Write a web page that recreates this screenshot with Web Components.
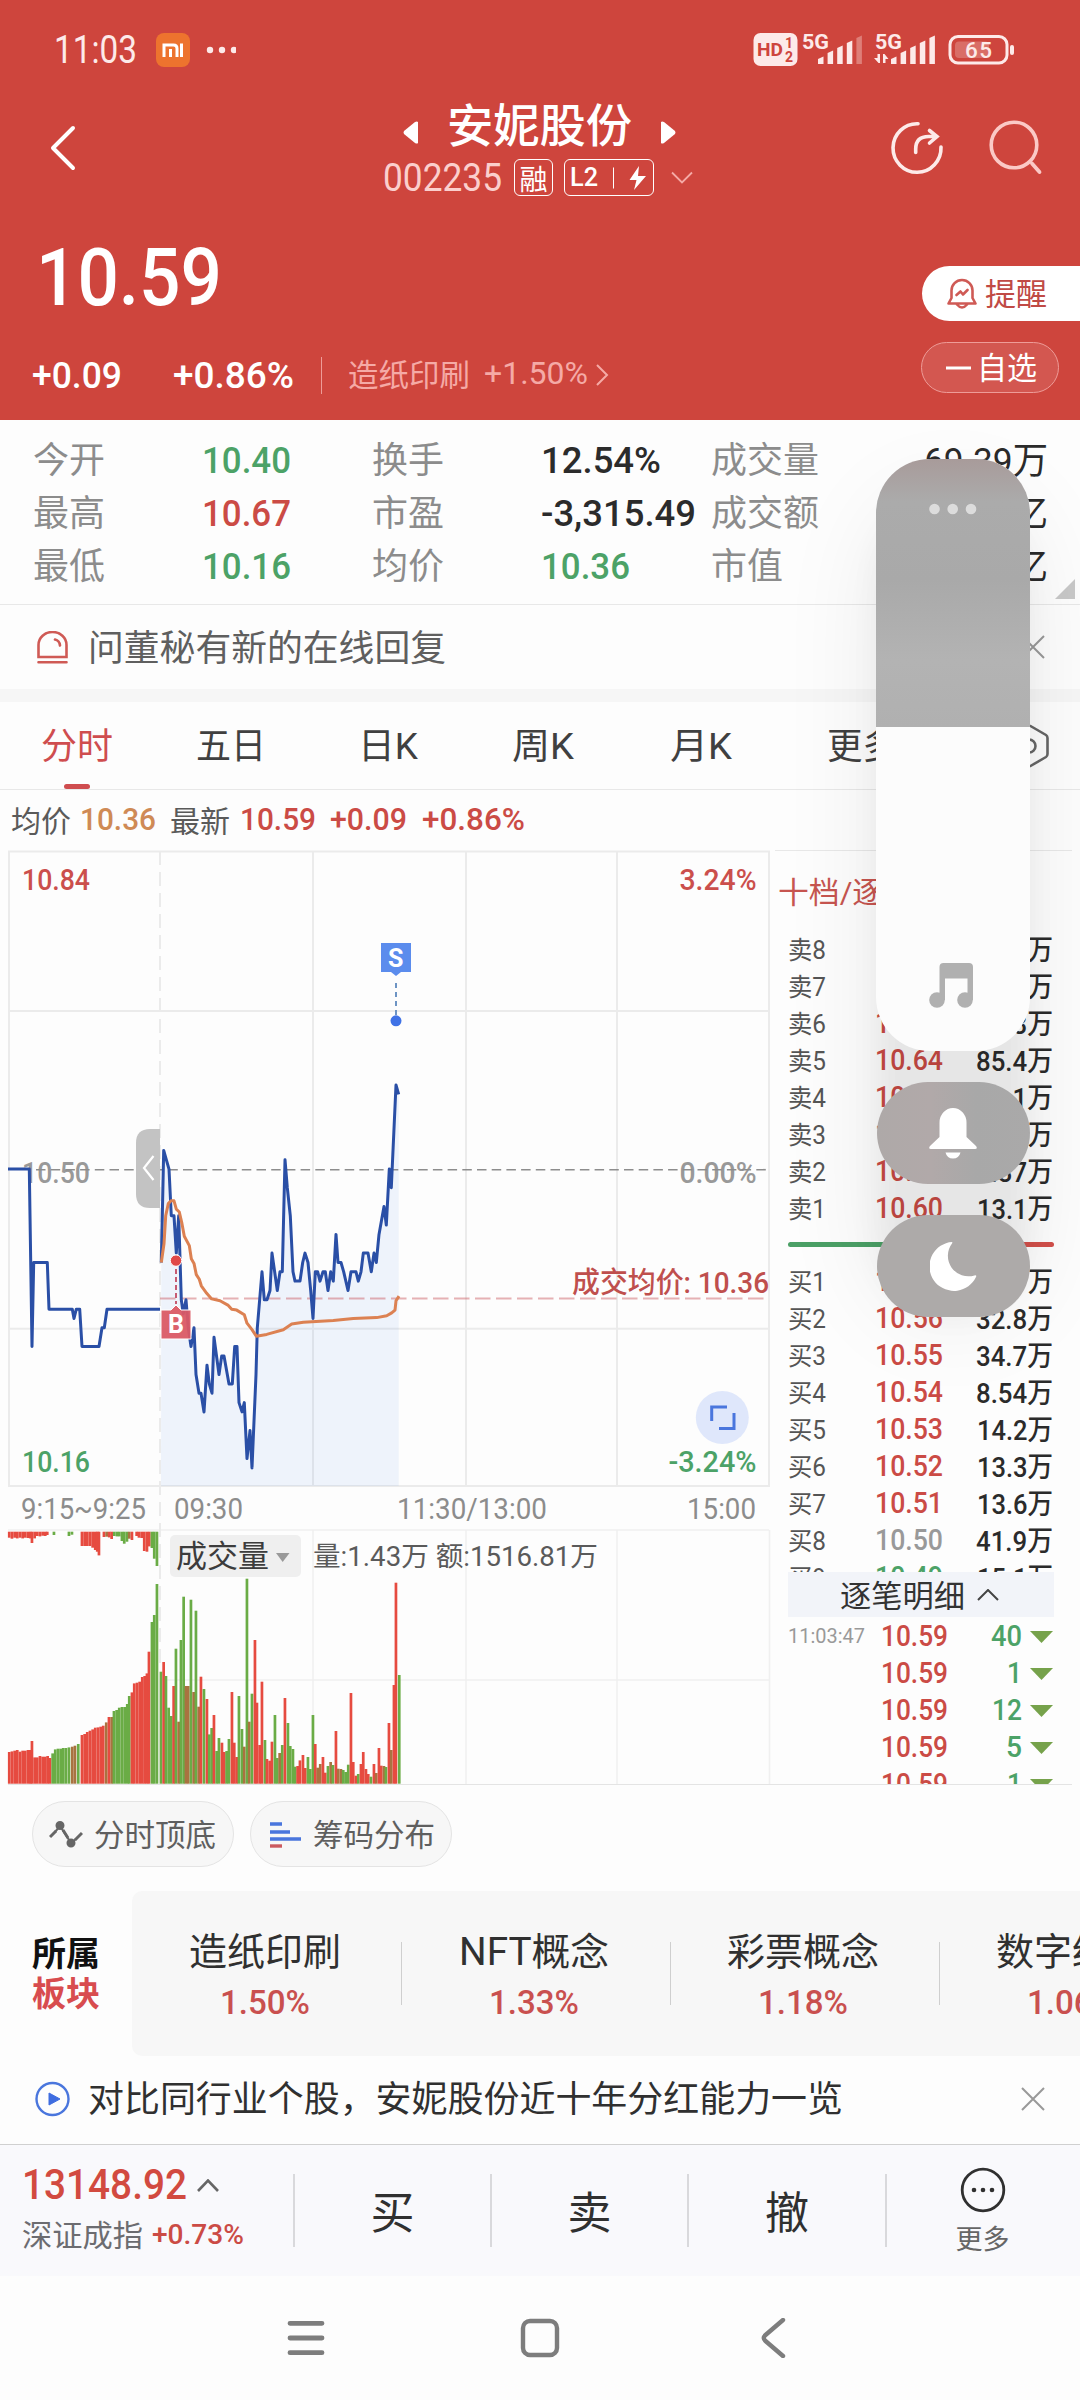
<!DOCTYPE html>
<html lang="zh-CN">
<head>
<meta charset="UTF-8">
<title>安妮股份 002235</title>
<style>
    html, body {
        margin: 0;
        padding: 0;
    }

    body {
        position: relative;
        width: 1080px;
        height: 2400px;
        overflow: hidden;
        background: #fdfdfd;
        font-family: Roboto, "Noto Sans CJK SC", sans-serif;
        --red: #cb4b45;
        --green: #4ca267;
        --line: #e8e8e8;
    }
</style>
</head>
<body>
<stock-header></stock-header>
<quote-grid></quote-grid>
<notice-row>
    <svg slot="icon" width="31" height="33" viewBox="0 0 31 33" fill="none" stroke="#cf5a55" stroke-width="2.6" stroke-linecap="round">
        <path d="M1.5 26V14a14 13 0 0 1 28 0v12zM1.5 31.3h28M18 8.5q4.500 1 5 6"/>
    </svg>
    <fit-text w="358" style="color:#5f5f5f">问董秘有新的在线回复</fit-text>
</notice-row>
<chart-tabs></chart-tabs>
<chart-panel>
    <time-chart slot="chart"></time-chart>
    <order-book slot="book"></order-book>
</chart-panel>
<tool-chips></tool-chips>
<sector-strip></sector-strip>
<notice-row class="ad" style="height:88px;--lift:3px">
    <svg slot="icon" width="35" height="36" viewBox="0 0 35 36" style="margin:0 -2px" fill="none">
        <circle cx="17.500" cy="18" r="16" stroke="#4a76dd" stroke-width="2.400"/>
        <path d="M14 12l11 6-11 6z" fill="#3f6de0" stroke="#3f6de0"/>
    </svg>
    <fit-text w="755" style="color:#303030">对比同行业个股，安妮股份近十年分红能力一览</fit-text>
</notice-row>
<trade-bar></trade-bar>
<nav-bar></nav-bar>
<volume-overlay></volume-overlay>

<script>
// Cria o shadow root a partir de um template
class BaseElement extends HTMLElement {
    constructor() {
        super();
        this.attachShadow({ mode: 'open' });
    }

    connectedCallback() {
        const template = document.createElement('template');
        template.innerHTML = this.render();
        this.shadowRoot.replaceChildren(template.content.cloneNode(true));
        this.ready();
    }

    ready() {}
}

// ============================================
// Text squeezed or stretched to a set width
// ============================================
class FitText extends BaseElement {
    render() {
        return `
            <style>
                :host { display: inline-block; flex: none; white-space: nowrap; line-height: 1.2; }
                span { display: inline-block; transform-origin: 0 50%; }
            </style>
            <span><slot></slot></span>
        `;
    }

    ready() {
        const width = Number(this.getAttribute('w'));
        const span = this.shadowRoot.querySelector('span');
        const natural = span.getBoundingClientRect().width;
        if (!width || !natural) return;
        // ideographs sit a little high on Roboto's baseline
        const drop = /[\u4e00-\u9fff]/.test(this.textContent) ? '0.050em' : '0';
        this.style.width = width + 'px';
        span.style.transform = `translateY(${drop}) scaleX(${width / natural})`;
    }
}

// ============================================
// Status bar
// ============================================
class StatusBar extends BaseElement {
    render() {
        const bars = (x, last) => [57, 51, 46, 41, 36].map((top, i) =>
            `<path d="M${x + i * 9.6} 64V${top + 2}l5.500-2.500V64z" opacity="${i === 4 ? last : 1}"/>`).join('');
        return `
            <style>
                :host { display: flex; height: 100px; align-items: center; padding-left: 54px; color: #fdeae9; }
                .time { font-size: 38px; font-weight: 400; margin-top: 1px; }
                .mi { margin-left: 19px; }
                .dots { margin-left: 14px; }
                .right { margin-left: auto; }
                text { font-family: Roboto, sans-serif; font-weight: 700; }
            </style>
            <fit-text class="time" w="83">11:03</fit-text>
            <svg class="mi" width="34" height="34" viewBox="0 0 34 34">
                <rect width="34" height="34" rx="8" fill="#ed732e"/>
                <g fill="none" stroke="#fff" stroke-width="3">
                    <path d="M8 24V12h9.500q3.500 0 3.500 3.500V24M14.500 16v8M25.500 10.500V24"/>
                </g>
            </svg>
            <svg class="dots" width="32" height="8" viewBox="0 0 32 8" fill="#fdeae9">
                <circle cx="6" cy="4" r="3.200"/><circle cx="18" cy="4" r="3.200"/><circle cx="30" cy="4" r="3.200"/>
            </svg>
            <svg class="right" width="330" height="100" viewBox="750 0 330 100" fill="#fdeae9">
                <rect x="753.500" y="33" width="44" height="33" rx="7"/>
                <text x="757" y="56" font-size="18.500" textLength="26" lengthAdjust="spacingAndGlyphs" fill="#ce453d">HD</text>
                <text x="785" y="48" font-size="14" fill="#ce453d">1</text>
                <text x="785" y="62" font-size="14" fill="#ce453d">2</text>
                <text x="802" y="49" font-size="20" textLength="27" lengthAdjust="spacingAndGlyphs">5G</text>
                ${bars(818, 0.35)}
                <text x="875" y="49" font-size="20" textLength="27" lengthAdjust="spacingAndGlyphs">5G</text>
                <path d="M880 54v9h-1.500l-4.500-5h3.500v-4zM883 63v-9h1.500l4 5h-3v4z"/>
                ${bars(891, 1)}
                <rect x="950" y="36.500" width="57" height="26.500" rx="8" fill="none" stroke="#fdeae9" stroke-width="3"/>
                <rect x="955" y="41.500" width="34" height="16.500" rx="4" opacity=".25"/>
                <rect x="1010" y="45" width="4" height="10" rx="2"/>
                <text x="965" y="58" font-size="22.500" style="font-weight:500" textLength="27">65</text>
            </svg>
        `;
    }
}

// ============================================
// Stock header: name, price, change
// ============================================
class StockHeader extends BaseElement {
    render() {
        return `
            <style>
                :host { display: block; height: 420px; background: #ce453d; color: #fff; }
                .title { display: grid; grid-template-columns: 300px 480px 1fr; height: 96px; align-items: center; }
                .back { margin-left: 49px; }
                .name { display: flex; height: 50px; align-items: center; justify-content: center; gap: 28px; margin-right: 2px; font-size: 46px; font-weight: 500; }
                .name svg { margin-top: 15px; }
                .code { display: flex; height: 37px; margin-top: 9px; align-items: center; padding-left: 83px; }
                .code .num { font-size: 38px; margin-top: 2px; color: #fbcfcd; }
                .tag { box-sizing: border-box; height: 37px; border: 1.500px solid #fff; border-radius: 6px; display: flex; align-items: center; justify-content: center; font-size: 28px; }
                .main { display: flex; justify-content: space-between; height: 224px; }
                .price { display: flex; align-items: center; height: 80px; margin: 42px 0 0 36px; font-size: 79px; font-weight: 500; }
                .change { display: flex; height: 40px; margin-top: 38px; padding-left: 32px; align-items: center; font-size: 37px; font-weight: 500; }
                .change i { width: 1px; height: 37px; margin: -2px 26px 0 27px; background: #ee9c98; }
                .sector { margin-top: -3px; font-size: 30.500px; font-weight: 400; color: #f5aaa6; }
                .side { display: flex; flex-direction: column; align-items: flex-end; }
                .pill { box-sizing: border-box; display: flex; align-items: center; font-size: 30.500px; }
                .alert { margin-top: 70px; width: 158px; height: 55px; padding-left: 25px; gap: 8px; border-radius: 28px 0 0 28px; background: #fff; color: #c04a45; }
                .watch { margin: 21px 21px 0 0; width: 138px; height: 51px; padding-left: 24px; gap: 6px; border-radius: 26px; border: 1.500px solid #ee9c98; background: rgba(255, 255, 255, .1); }
            </style>
            <status-bar></status-bar>
            <div class="title">
                <svg class="back" width="30" height="46" viewBox="0 0 30 46" fill="none" stroke="#fff" stroke-width="4" stroke-linecap="round" stroke-linejoin="round"><path d="M24 3L4 23l20 20"/></svg>
                <div>
                    <div class="name">
                        <svg width="16" height="23" viewBox="0 0 16 23" fill="#fff"><path d="M15 1v21q-1 1-3 0L1 13q-1-1.500 0-3L12 1q2-1 3 0z"/></svg>
                        <fit-text w="185">安妮股份</fit-text>
                        <svg width="16" height="23" viewBox="0 0 16 23" fill="#fff"><path d="M1 1v21q1 1 3 0l11-9q1-1.500 0-3L4 1Q2 0 1 1z"/></svg>
                    </div>
                    <div class="code">
                        <fit-text class="num" w="119">002235</fit-text>
                        <div class="tag" style="width:39px;margin-left:12px">融</div>
                        <div class="tag" style="width:90px;margin-left:11px;gap:11px">
                            <fit-text w="28" style="font-size:25px;font-weight:500">L2</fit-text>
                            <svg width="40" height="26" viewBox="0 0 40 26" fill="#fff"><path d="M4 2.500h1v21H4zM30 1L20.500 15h7L25 25l12-14h-8z"/></svg>
                        </div>
                        <svg style="margin-left:17px" width="22" height="13" viewBox="0 0 22 13" fill="none" stroke="#f5aaa6" stroke-width="1.800"><path d="M1 1.500l10 10 10-10"/></svg>
                    </div>
                </div>
                <svg width="300" height="96" viewBox="780 100 300 96" fill="none" stroke-linecap="round">
                    <path d="M918 123.700A24 24.300 0 1 0 941 147" stroke="#fdeae9" stroke-width="3.600"/>
                    <path d="M915.700 152.500V149q0-12.500 13-12.500h7M929.500 130.500l7.500 6-7.500 6.500" stroke="#fdeae9" stroke-width="3.600"/>
                    <circle cx="1014" cy="145" r="22.800" stroke="#fbc9c6" stroke-width="3.600"/>
                    <path d="M1032 163.500l7.500 8.500" stroke="#fbc9c6" stroke-width="3.800"/>
                </svg>
            </div>
            <div class="main">
                <div>
                    <div class="price"><fit-text w="186">10.59</fit-text></div>
                    <div class="change">
                        <fit-text w="90">+0.09</fit-text>
                        <fit-text w="121" style="margin-left:51px">+0.86%</fit-text>
                        <i></i>
                        <fit-text class="sector" w="122">造纸印刷</fit-text>
                        <fit-text class="sector" w="104" style="margin-left:14px">+1.50%</fit-text>
                        <svg style="margin:-3px 0 0 8px" width="13" height="22" viewBox="0 0 13 22" fill="none" stroke="#f5aaa6" stroke-width="2"><path d="M1 1l10 10L1 21"/></svg>
                    </div>
                </div>
                <div class="side">
                    <div class="pill alert">
                        <svg width="30" height="32" viewBox="0 0 30 32" fill="none" stroke="#cf5a55" stroke-width="2.600" stroke-linejoin="round" stroke-linecap="round">
                            <path d="M4.500 20v-7.500a10.500 10.500 0 0 1 21 0V20l3 5.500h-27zM10 26.500q5 6 10 0M9.500 17l4-3.500 2.500 3 4.500-4.500"/>
                        </svg>
                        <fit-text w="62">提醒</fit-text>
                    </div>
                    <div class="pill watch">
                        <svg width="25" height="4"><rect width="25" height="3" y=".5" fill="#fff"/></svg>
                        <fit-text w="60">自选</fit-text>
                    </div>
                </div>
            </div>
        `;
    }
}

// ============================================
// Quote figures
// ============================================
class QuoteGrid extends BaseElement {
    render() {
        const rows = [
            ['今开', '10.40', 'g', 89, '换手', '12.54%', '', 120, '成交量', '69.39万', 124],
            ['最高', '10.67', 'r', 89, '市盈', '-3,315.49', '', 155, '成交额', '亿', 35],
            ['最低', '10.16', 'g', 89, '均价', '10.36', 'g', 89, '市值', '亿', 35]
        ];
        return `
            <style>
                :host { display: grid; box-sizing: border-box; position: relative; height: 185px; padding: 13.500px 32px 0 33px;
                    grid-template-columns: 169px 170px 169px 170px 1fr; grid-auto-rows: 53px; align-items: center;
                    border-bottom: 1px solid var(--line); font-size: 37.500px; color: #2b2b2b; }
                .label { font-size: 36px; color: #8c8c8c; }
                .num { font-weight: 500; }
                .g { color: var(--green); }
                .r { color: var(--red); }
                .end { text-align: right; font-size: 37px; }
                .corner { position: absolute; right: 5px; bottom: 5px; border: 10px solid transparent; border-right-color: #c8c8c8; border-bottom-color: #c8c8c8; }
            </style>
            ${rows.map(r => `
                <fit-text class="label" w="72">${r[0]}</fit-text>
                <fit-text class="num ${r[2]}" w="${r[3]}">${r[1]}</fit-text>
                <fit-text class="label" w="72">${r[4]}</fit-text>
                <fit-text class="num ${r[6]}" w="${r[7]}">${r[5]}</fit-text>
                <div style="display:flex;justify-content:space-between">
                    <fit-text class="label" w="${r[8].length * 36}">${r[8]}</fit-text>
                    <fit-text class="end" w="${r[10]}">${r[9]}</fit-text>
                </div>`).join('')}
            <div class="corner"></div>
        `;
    }
}

// ============================================
// Notice with icon slot and a close cross
// ============================================
class NoticeRow extends BaseElement {
    render() {
        return `
            <style>
                :host { display: flex; box-sizing: border-box; height: 84px; align-items: center; padding: 0 35px var(--lift, 0px) 37px; font-size: 35.800px; }
                .text { margin-left: 20px; display: flex; }
                .close { margin-left: auto; }
            </style>
            <slot name="icon"></slot>
            <div class="text"><slot></slot></div>
            <svg class="close" width="24" height="24" viewBox="0 0 24 24" stroke="#999" stroke-width="2"><path d="M1 1l22 22M23 1L1 23"/></svg>
        `;
    }
}

// ============================================
// Period tabs and the line of figures below
// ============================================
class ChartTabs extends BaseElement {
    render() {
        const tabs = [['分时', 72], ['五日', 70], ['日K', 60], ['周K', 62], ['月K', 62], ['更多', 71]];
        return `
            <style>
                :host { display: block; border-top: 13px solid #f6f6f6; }
                .tabs { display: grid; grid-template-columns: 154px 154px 160px 149px 167px 156px 1fr; height: 87px;
                    border-bottom: 1px solid var(--line); align-items: center; justify-items: center; font-size: 36px; color: #404040; }
                .tab { position: relative; height: 87px; display: flex; align-items: center; }
                .tab fit-text { margin-top: 1px; }
                .active { color: #cf4d4f; }
                .active::after { content: ""; position: absolute; left: 50%; bottom: 0; width: 26px; height: 5px; margin-left: -13px; border-radius: 3px; background: #cf4d4f; }
                .figures { display: flex; height: 59px; align-items: center; padding-left: 11px; font-size: 31.500px; font-weight: 500; color: var(--red); }
                .label { font-size: 30px; font-weight: 400; color: #5a5a5a; }
            </style>
            <div class="tabs">
                ${tabs.map(([name, w], i) => `<div class="tab ${i ? '' : 'active'}"><fit-text w="${w}">${name}</fit-text></div>`).join('')}
                <svg width="44" height="44" viewBox="-22 -22 44 44" style="margin-left:38px" fill="none" stroke="#666" stroke-width="2.600" stroke-linejoin="round">
                    <path d="M-1.500-20h3L17-11q1.500 1 1.500 3V8q0 2-1.500 3L1.500 20h-3L-17 11q-1.500-1-1.500-3V-8q0-2 1.500-3z"/>
                    <circle r="6.500"/>
                </svg>
            </div>
            <div class="figures">
                <fit-text class="label" w="60">均价</fit-text>
                <fit-text w="76" style="margin-left:9px;color:#cf8a55">10.36</fit-text>
                <fit-text class="label" w="60" style="margin-left:14px">最新</fit-text>
                <fit-text w="76" style="margin-left:10px">10.59</fit-text>
                <fit-text w="77" style="margin-left:14px">+0.09</fit-text>
                <fit-text w="103" style="margin-left:15px">+0.86%</fit-text>
            </div>
        `;
    }
}

// ============================================
// Chart on the left, order book on the right
// ============================================
class ChartPanel extends BaseElement {
    render() {
        return `
            <style>
                :host { display: grid; grid-template-columns: 775px 1fr; height: 935px; margin-top: 1px; }
            </style>
            <slot name="chart"></slot>
            <slot name="book"></slot>
        `;
    }
}

// Price series: x in thirds of a pixel, price in cents above 10.00
const AUCTION = [[24, 50], [88, 50], [96, 31], [101, 40], [142, 40], [147, 35], [217, 35], [222, 34], [229, 35], [239, 35], [246, 31], [297, 31], [306, 33], [313, 33], [321, 35], [480, 35]];
const PRICES = [
    [484, 40], [491, 52], [499, 51], [507, 50], [514, 45], [522, 45], [529, 41], [536, 45], [544, 36], [550, 34.500], [558, 36], [565, 33], [573, 31], [582, 33],
    [588, 28], [597, 26], [603, 26], [612, 24], [621, 29], [628, 27], [636, 26], [642, 32], [657, 28], [665, 30], [672, 30], [687, 27], [697, 27],
    [704, 31], [711, 31], [717, 25], [726, 24], [733, 25], [741, 19], [750, 22], [756, 18], [768, 28], [772, 33], [786, 39], [793, 36], [801, 36],
    [810, 37], [816, 41], [832, 37], [840, 39], [847, 39], [855, 51], [862, 48], [871, 45], [879, 39], [885, 38], [900, 38], [908, 40], [915, 41],
    [924, 40], [932, 37], [939, 34], [946, 39], [953, 39], [960, 38], [969, 39], [976, 39], [984, 37], [992, 39], [1000, 38], [1008, 43], [1014, 40],
    [1023, 40], [1031, 39], [1044, 37], [1053, 39], [1068, 39], [1075, 38], [1083, 39], [1090, 41], [1104, 41], [1114, 39], [1122, 41], [1129, 40],
    [1137, 43], [1152, 46], [1159, 44], [1168, 50], [1174, 48], [1188, 59], [1196, 58]
];
const AVERAGE = [
    [484, 40], [492, 42], [497, 45], [505, 46.300], [513, 46.600], [522, 46.600], [529, 45.700], [538, 45.400], [545, 44.300], [553, 42.800], [568, 41.800],
    [574, 40.400], [582, 39.900], [589, 38.700], [598, 38.200], [604, 37.500], [620, 36.700], [635, 36.100], [660, 35.900], [685, 35.400], [695, 35],
    [710, 34.900], [733, 34.400], [741, 33.500], [756, 32.800], [769, 32.100], [800, 32.300], [850, 32.800], [875, 33.400], [910, 33.600], [1000, 33.800],
    [1060, 34], [1130, 34.100], [1160, 34.300], [1175, 34.600], [1185, 34.900], [1188, 35.900], [1197, 36.400]
];
// Volume bars: "x:height" in thirds of a pixel, grouped by colour letter
const VOLUMES = `
    r 28:95 36:97 44:99 52:101 60:96 68:99 76:99 84:101 91:101 96:128 104:79 112:79 120:83 128:81 136:81 143:83 150:77
    g 158:91 166:103 174:105 182:105 190:107 198:107 207:109 b 217:111 225:114 g 235:119
    r 246:146 254:149 262:155 270:159 278:163 286:168 294:169 302:171 310:174 b 319:184 r 327:200 b 335:200
    g 342:218 350:221 358:228 366:230 374:230 382:239 388:263 r 396:274 403:301 411:303 419:306 427:320 434:323 441:331 447:396
    g 456:485 463:506 471:599
    483:336 r 491:365 g 498:323 506:228 514:203 r 521:293 g 528:405 b 536:186 g 543:431 551:561 b 558:293 565:293 g 573:552 b 581:275
    g 588:519 b 596:231 r 603:321 g 612:284 r 621:254 g 628:148 635:167 r 642:206 g 650:98 657:137 r 666:123 673:95 g 680:98 687:134
    r 696:275 703:123 710:80 g 717:263 726:164 b 733:111 g 741:615 b 748:186 g 756:270 r 765:431 771:243 779:116 786:306 g 795:131
    r 801:74 809:69 816:126 g 825:206 832:77 b 839:92 g 847:116 r 855:257 g 864:182 871:113 879:104 886:51 r 893:53 900:70 909:86 916:47
    g 924:80 931:44 939:206 r 946:119 b 953:48 961:59 r 969:80 976:33 g 984:53 b 992:65 g 999:56 r 1008:158 b 1015:45 1023:44 g 1030:41
    1037:35 1045:57 r 1053:272 1060:65 1068:24 g 1075:29 r 1083:59 1090:95 1098:44 1105:29 g 1113:21 r 1122:59 b 1129:32 r 1137:107 1144:54
    b 1152:53 g 1158:50 r 1167:182 b 1174:101 r 1182:296 1188:603 g 1198:326`;
// Unmatched volume, hanging from the top of the pane
const UNMATCHED = `
    r 28:18 36:21 44:18 52:20 60:18 68:20 76:18 84:19 91:20 96:34 104:20 112:13 120:14 128:12 136:13 142:10 g 162:10 207:13 216:9
    r 246:43 254:43 262:43 270:43 278:48 286:55 292:60 297:71 312:16 b 320:15 r 328:17 335:22 g 343:13 351:14 358:14 366:28 373:36 381:30
    b 388:21 r 396:25 410:13 417:18 425:19 433:58 441:60 448:44 g 456:49 463:81 471:103`;
const BAR_COLORS = { r: '#e64b40', g: '#6aac46', b: '#a97340' };

class TimeChart extends BaseElement {
    priceY(cents) {
        return 851.5 + (84 - cents) * 9.34;
    }

    points(series) {
        return series.map(([x, c]) => `${(x / 3).toFixed(1)},${this.priceY(c).toFixed(1)}`).join(' ');
    }

    bars(list, base, direction) {
        let color = 'r';
        return list.trim().split(/\s+/).map(item => {
            if (BAR_COLORS[item]) {
                color = item;
                return '';
            }
            const [x, h] = item.split(':').map(Number);
            const y = direction > 0 ? base : base - h / 3;
            return `<rect x="${(x / 3 - 1.4).toFixed(1)}" y="${y.toFixed(1)}" width="2.700" height="${(h / 3).toFixed(1)}" fill="${BAR_COLORS[color]}"/>`;
        }).join('');
    }

    render() {
        const line = this.points(PRICES);
        const label = (x, y, w, text, color) =>
            `<text x="${x}" y="${y}" textLength="${w}" lengthAdjust="spacingAndGlyphs" fill="${color}">${text}</text>`;
        return `
            <style>
                :host { display: block; }
                svg { display: block; }
                text { font-family: Roboto, "Noto Sans CJK SC", sans-serif; font-size: 29px; font-weight: 500; }
                .plain { font-weight: 400; }
                .time text { font-weight: 400; font-size: 29.500px; }
            </style>
            <svg width="775" height="935" viewBox="0 850 775 935">
                <!-- grid -->
                <g stroke="#ebebeb" stroke-width="2" fill="none">
                    <path d="M9 851.500H769V1486H9zM9 1011H769M9 1328.700H769M313 851V1487M466 851V1487M617 851V1487"/>
                    <path d="M8 1530H769M160 1680H769M313 1530V1784M466 1530V1784M617 1530V1784M769.500 1530V1784" stroke-width="1.500" stroke="#f0f0f0"/>
                    <path d="M160 851V1668" stroke-dasharray="14 7"/>
                    <path d="M8 1784.500H775" stroke="#e4e4e4" stroke-width="1"/>
                </g>

                <!-- price -->
                <polygon points="161,1486 ${line} 398.700,1486" fill="#5b8ced" fill-opacity=".09"/>
                ${label(22, 1182.5, 68, '10.50', '#999')}
                ${label(679.5, 1182.5, 77, '0.00%', '#999')}
                <path d="M36 1169.700H769" stroke="#8d8d8d" stroke-width="1.600" stroke-dasharray="9.500 5.200"/>
                <path d="M160 1298.500H769" stroke="#c8555a" stroke-opacity=".45" stroke-width="1.800" stroke-dasharray="15.500 5.500"/>
                <g fill="none" stroke-width="3" stroke-linejoin="round">
                    <polyline points="${this.points(AUCTION)}" stroke="#2a4fa6"/>
                    <polyline points="${line}" stroke="#2a4fa6"/>
                    <polyline points="${this.points(AVERAGE)}" stroke="#dc8152"/>
                </g>

                <path d="M160 1129h-10q-14 0-14 14v51q0 14 14 14h10z" fill="#c3c3c3"/>
                <path d="M153.500 1156l-9.500 12 9.500 12" fill="none" stroke="#fff" stroke-width="2.200"/>

                <!-- trade markers -->
                <path d="M176 1269V1304" stroke="#c65a72" stroke-width="2" stroke-dasharray="5 3"/>
                <circle cx="176" cy="1260.600" r="5.700" fill="#e04848" stroke="#fff" stroke-width="1"/>
                <path d="M161 1310h10l5-5 5 5h10v29h-30z" fill="#da5a65" fill-opacity=".95" stroke="#fff" stroke-width="1"/>
                <text x="168" y="1333" style="font-weight:700;font-size:25px" fill="#fff">B</text>
                <path d="M396 983V1015" stroke="#6d94c4" stroke-width="2" stroke-dasharray="5 4"/>
                <circle cx="396" cy="1020.800" r="5.500" fill="#3f72e6"/>
                <path d="M381 943h30v29h-10l-5 4-5-4h-10z" fill="#5b8ced"/>
                <text x="388" y="966.500" style="font-weight:700;font-size:25px" fill="#fff">S</text>

                <!-- axis labels -->
                ${label(22, 890, 68, '10.84', '#cb4f4c')}
                ${label(679.5, 890, 77, '3.24%', '#cb4f4c')}
                ${label(22, 1472, 68, '10.16', '#4ca267')}
                ${label(668.5, 1472, 88, '-3.24%', '#4ca267')}
                ${label(572, 1293, 197, '成交均价: 10.36', '#bf4f4d')}
                <g class="time">
                    ${label(21, 1519, 125, '9:15~9:25', '#8c8c8c')}
                    ${label(174, 1519, 69, '09:30', '#8c8c8c')}
                    ${label(397, 1519, 150, '11:30/13:00', '#8c8c8c')}
                    ${label(687, 1519, 69, '15:00', '#8c8c8c')}
                </g>

                <circle cx="722.300" cy="1417.600" r="26.500" fill="#dfe7fb"/>
                <path d="M711.700 1421V1407H727M734 1413V1428.500H719" fill="none" stroke="#4a76dd" stroke-width="3"/>

                <!-- volume -->
                ${this.bars(UNMATCHED, 1531.7, 1)}
                ${this.bars(VOLUMES, 1783.7, -1)}
                <rect x="170" y="1535" width="131" height="42" rx="5" fill="#efefef"/>
                <text class="plain" x="176" y="1567" style="font-size:31px" textLength="93" fill="#3c3c3c">成交量</text>
                <path d="M276 1553h13.500l-6.800 9z" fill="#999"/>
                <text class="plain" x="313" y="1566" style="font-size:27px" textLength="285" lengthAdjust="spacingAndGlyphs" fill="#5a5a5a">量:1.43万 额:1516.81万</text>
            </svg>
        `;
    }
}

// ============================================
// Order book with tick details
// ============================================
class OrderBook extends BaseElement {
    row(name, price, volume, color = '') {
        return `
            <div class="row">
                <fit-text class="name" w="38">${name}</fit-text>
                <fit-text class="price ${color}" w="68">${price}</fit-text>
                <fit-text class="vol" w="${volume.length > 1 ? 77 - (volume[0] === '1' ? 1 : 0) : 25}">${volume}</fit-text>
            </div>`;
    }

    render() {
        const sells = [['卖8', '10.67', '万'], ['卖7', '10.66', '万'], ['卖6', '10.65', '26.3万'], ['卖5', '10.64', '85.4万'], ['卖4', '10.63', '52.1万'], ['卖3', '10.62', '万'], ['卖2', '10.61', '6.37万'], ['卖1', '10.60', '13.1万']];
        const buys = [['买1', '10.57', '万'], ['买2', '10.56', '32.8万'], ['买3', '10.55', '34.7万'], ['买4', '10.54', '8.54万'], ['买5', '10.53', '14.2万'], ['买6', '10.52', '13.3万'], ['买7', '10.51', '13.6万'], ['买8', '10.50', '41.9万', 'flat'], ['买9', '10.49', '15.1万', 'down']];
        const ticks = [['11:03:47', '40', 31], ['', '1', 15], ['', '12', 30], ['', '5', 16], ['', '1', 15]];
        return `
            <style>
                :host { display: block; box-sizing: border-box; margin-right: 8px; border-top: 1px solid var(--line); border-bottom: 1px solid #e4e4e4; }
                .head { height: 80px; display: flex; align-items: center; padding-left: 3px; font-size: 30px; color: #c75550; }
                .body { margin: 0 18px 0 13px; }
                .row { display: grid; grid-template-columns: 87px 1fr auto; height: 37px; align-items: center; padding-right: 1px; }
                .name { font-size: 25px; color: #555; }
                .price { font-size: 29px; font-weight: 500; color: var(--red); }
                .vol { font-size: 28px; font-weight: 500; color: #2b2b2b; }
                .flat { color: #999; }
                .down { color: var(--green); }
                .ratio { height: 5px; margin: 15px 0 16px; border-radius: 3px; background: linear-gradient(90deg, #4ba066 60%, #d2504b 60%); }
                .buys { height: 309px; overflow: hidden; }
                .more { display: flex; height: 45px; align-items: center; padding-left: 52px; gap: 12px; background: #f2f4f9; font-size: 31px; color: #333; }
                .ticks { height: 167px; overflow: hidden; }
                .tick { display: grid; grid-template-columns: 93px 1fr auto 23px; column-gap: 0; height: 37px; align-items: center; padding: 2px 1px 0 0; box-sizing: border-box; }
                .tick .time { font-size: 19.500px; color: #999; }
                .tick .qty { font-size: 29px; font-weight: 500; margin-right: 8px; }
            </style>
            <div class="head"><fit-text w="136">十档/逐笔</fit-text></div>
            <div class="body">
                ${sells.map(r => this.row(...r)).join('')}
                <div class="ratio"></div>
                <div class="buys">${buys.map(r => this.row(...r)).join('')}</div>
                <div class="more">
                    <fit-text w="125">逐笔明细</fit-text>
                    <svg width="22" height="12" viewBox="0 0 22 12" fill="none" stroke="#444" stroke-width="2"><path d="M1 11L11 1l10 10"/></svg>
                </div>
                <div class="ticks">
                    ${ticks.map(([time, qty, w]) => `
                        <div class="tick">
                            <fit-text class="time" w="77">${time}</fit-text>
                            <fit-text class="price" w="67">10.59</fit-text>
                            <fit-text class="qty down" w="${w}">${qty}</fit-text>
                            <svg width="23" height="12"><path d="M0 0h23L11.500 12z" fill="#76a24b"/></svg>
                        </div>`).join('')}
                </div>
            </div>
        `;
    }
}

// ============================================
// Tool chips
// ============================================
class ToolChips extends BaseElement {
    render() {
        return `
            <style>
                :host { display: flex; box-sizing: border-box; height: 106px; padding: 16px 32px 0; gap: 16px; }
                .chip { box-sizing: border-box; display: flex; width: 202px; height: 66px; align-items: center; padding-left: 16px; gap: 11px;
                    border: 1px solid #e4e4e4; border-radius: 33px; background: #f7f7f7; font-size: 30.500px; color: #5f5f5f; }
            </style>
            <div class="chip">
                <svg width="34" height="30" viewBox="0 0 34 30" fill="none" stroke="#666" stroke-width="3">
                    <path d="M1 18l6-6M14 11l5 8M26 21l7-7"/>
                    <circle cx="11" cy="6.500" r="3.500" fill="#666" stroke-width="2"/><circle cx="22" cy="24" r="3.500" fill="#666" stroke-width="2"/>
                    <path d="M6 13l5-6 11 17 5-4" stroke-width="2"/>
                </svg>
                <fit-text w="122">分时顶底</fit-text>
            </div>
            <div class="chip" style="padding-left:19px">
                <svg width="32" height="30" viewBox="0 0 32 30" stroke="#4a76dd" stroke-width="3.400">
                    <path d="M0 5h12M0 13h20M0 20h31"/><path d="M0 27h12" stroke="#cb5a5f"/>
                </svg>
                <fit-text w="122">筹码分布</fit-text>
            </div>
        `;
    }
}

// ============================================
// Sector strip
// ============================================
class SectorStrip extends BaseElement {
    render() {
        const items = [['造纸印刷', '1.50%', 152], ['NFT概念', '1.33%', 150], ['彩票概念', '1.18%', 152], ['数字经济', '1.06%', 152]];
        return `
            <style>
                :host { display: flex; height: 165px; overflow: hidden; }
                .label { width: 132px; flex: none; display: flex; flex-direction: column; justify-content: center; align-items: center; font-size: 34px; font-weight: 700; line-height: 40px; color: #111; }
                .label span:last-child { color: #d84c4f; }
                .strip { display: flex; flex: 1; border-radius: 10px 0 0 10px; background: #f7f7f7; overflow: hidden; }
                .item { flex: none; width: 269px; display: flex; flex-direction: column; align-items: center; font-size: 38px; color: #303030; padding: 36px 3px 0 0; box-sizing: border-box; }
                .item + .item { background: linear-gradient(#cfcfcf, #cfcfcf) no-repeat 0 51px / 1px 63px; }
                .name { line-height: 46px; }
                .pct { margin-top: 6px; line-height: 46px; font-size: 34px; font-weight: 500; color: #c9504f; }
            </style>
            <div class="label"><span>所属</span><span>板块</span></div>
            <div class="strip">
                ${items.map(([name, pct, w]) => `<div class="item"><fit-text class="name" w="${w}">${name}</fit-text><fit-text class="pct" w="90">${pct}</fit-text></div>`).join('')}
            </div>
        `;
    }
}

// ============================================
// Index quote and trade buttons
// ============================================
class TradeBar extends BaseElement {
    render() {
        return `
            <style>
                :host { display: grid; box-sizing: border-box; height: 132px; grid-template-columns: 293px 197px 197px 198px 1fr; border-top: 1px solid #d0d0d0; background: #f9f9fc; }
                .index { padding-left: 22px; }
                .top { display: flex; align-items: center; height: 50px; margin-top: 15px; gap: 10px; font-size: 42px; font-weight: 500; color: #d24a40; }
                .bottom { display: flex; align-items: center; height: 40px; margin-top: 4px; font-size: 30px; color: #6c6c70; }
                .bottom .pct { margin: 2px 0 0 9px; font-size: 28px; font-weight: 500; color: var(--red); }
                .btn { display: flex; align-items: center; justify-content: center; padding: 0 0 2px 2px; font-size: 44px; font-weight: 400; color: #303030;
                    background: linear-gradient(#d9d9dc, #d9d9dc) no-repeat 0 29px / 2px 73px; }
                .more { display: flex; flex-direction: column; align-items: center; font-size: 27px; color: #666; padding-top: 22px;
                    background: linear-gradient(#d9d9dc, #d9d9dc) no-repeat 0 29px / 2px 73px; }
            </style>
            <div class="index">
                <div class="top"><fit-text w="165">13148.92</fit-text>
                    <svg width="22" height="13" viewBox="0 0 22 13" fill="none" stroke="#666" stroke-width="2.600"><path d="M1 12L11 1.500 21 12"/></svg>
                </div>
                <div class="bottom"><fit-text w="121">深证成指</fit-text><fit-text class="pct" w="92">+0.73%</fit-text></div>
            </div>
            <div class="btn">买</div>
            <div class="btn">卖</div>
            <div class="btn">撤</div>
            <div class="more">
                <svg width="46" height="46" viewBox="-23 -23 46 46" fill="#303030">
                    <circle r="20.800" fill="none" stroke="#303030" stroke-width="2.800"/>
                    <circle cx="-9" r="2.300"/><circle r="2.300"/><circle cx="9" r="2.300"/>
                </svg>
                <fit-text w="54" style="margin-top:10px">更多</fit-text>
            </div>
        `;
    }
}

class NavBar extends BaseElement {
    render() {
        return `
            <style>
                :host { display: flex; height: 124px; align-items: center; justify-content: center; gap: 194.500px; background: #fdfdfd; }
            </style>
            <svg width="40" height="40" viewBox="0 0 40 40" fill="none" stroke="#7d7d7d" stroke-width="4.800" stroke-linecap="round"><path d="M4 5.300h32M4 20h32M4 34.700h32"/></svg>
            <svg width="40" height="40" viewBox="0 0 40 40" fill="none" stroke="#7d7d7d" stroke-width="4.400"><rect x="3" y="3" width="34" height="34" rx="7"/></svg>
            <svg width="40" height="40" viewBox="0 0 40 40" fill="none" stroke="#7d7d7d" stroke-width="4.400" stroke-linecap="round" stroke-linejoin="round"><path d="M28 2L10.500 17q-3.500 3 0 6L28 38"/></svg>
        `;
    }
}

// ============================================
// Volume slider and sound mode buttons, floating over the page
// ============================================
class VolumeOverlay extends BaseElement {
    render() {
        return `
            <style>
                :host { position: absolute; left: 876px; top: 459px; width: 154px; display: flex; flex-direction: column; align-items: center; isolation: isolate; }
                /* one soft shadow behind the whole stack */
                :host::before { content: ""; position: absolute; z-index: -1; inset: 60px 20px 20px; border-radius: 60px;
                    background: rgba(0, 0, 0, .09); box-shadow: 0 0 30px 20px rgba(0, 0, 0, .045), 0 0 100px 20px rgba(0, 0, 0, .08); }
                .slider { width: 154px; height: 592px; border-radius: 54px; overflow: hidden; background: #fcfcfc; display: flex; flex-direction: column; align-items: center; }
                .level { width: 100%; height: 268px; display: flex; justify-content: center; background: linear-gradient(#a89b9a, #ababab 16%, #a9a9a9 45%, #b3b3b3 75%, #b0b0b0); }
                .level svg { margin-top: 44px; }
                .slider > svg { margin: 236px 4px 0 0; }
                .mode { width: 153px; height: 102px; margin-top: 31px; border-radius: 51px; display: flex; align-items: center; justify-content: center; background: linear-gradient(90deg, #aea9a8, #b1a9a9 35%, #a8a8a8 65%, #aaa9a9); }
                .bottom { background: #adaaa9; }
            </style>
            <div class="slider">
                <div class="level">
                    <svg width="48" height="12" viewBox="0 0 48 12" fill="#dcdcdc"><circle cx="5.500" cy="6" r="5.300"/><circle cx="23.700" cy="6" r="5.300"/><circle cx="42" cy="6" r="5.300"/></svg>
                </div>
                <svg width="44" height="45" viewBox="0 0 44 45" fill="#b0b0b0"><path d="M10.500 37V4q0-4 4-4H40q4 0 4 4v33h-5.500V15.500H16V37z"/><circle cx="8" cy="37" r="7.800"/><circle cx="36" cy="37" r="7.800"/></svg>
            </div>
            <div class="mode">
                <svg width="48" height="51" viewBox="0 0 48 51" fill="#fff"><path d="M10.500 14.500a13.500 14.500 0 0 1 27 0V29l9.500 9q2 3-1 3H2q-3 0-1-3l9.500-9zM16.500 44.500h15q-1.500 6-7.500 6t-7.500-6z"/></svg>
            </div>
            <div class="mode bottom">
                <svg width="47" height="50" viewBox="0 0 47 50" fill="#fff"><path d="M22 1q-3 0-6 1.200A24.500 24.500 0 1 0 46 36q1-2-1.500-1.600A20.500 20.500 0 0 1 22 2.500Q22.800 1 22 1z"/></svg>
            </div>
        `;
    }
}

customElements.define('status-bar', StatusBar);
customElements.define('stock-header', StockHeader);
customElements.define('quote-grid', QuoteGrid);
customElements.define('notice-row', NoticeRow);
customElements.define('chart-tabs', ChartTabs);
customElements.define('chart-panel', ChartPanel);
customElements.define('time-chart', TimeChart);
customElements.define('order-book', OrderBook);
customElements.define('tool-chips', ToolChips);
customElements.define('sector-strip', SectorStrip);
customElements.define('trade-bar', TradeBar);
customElements.define('nav-bar', NavBar);
customElements.define('volume-overlay', VolumeOverlay);
// last, so that every text is measured with its final font size
customElements.define('fit-text', FitText);
</script>
</body>
</html>
